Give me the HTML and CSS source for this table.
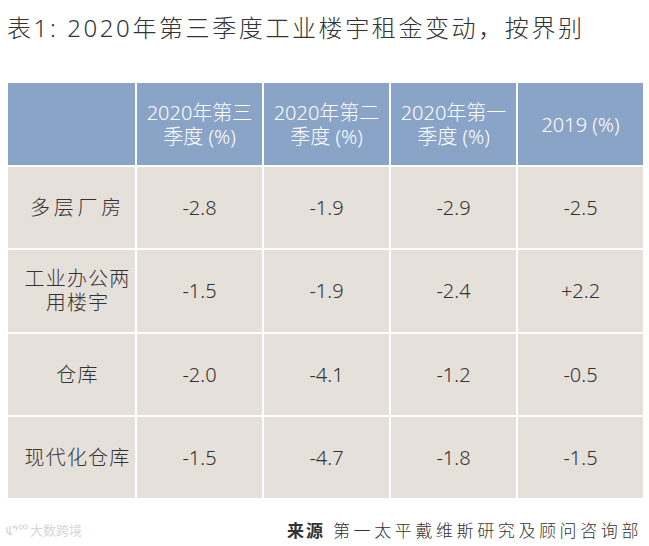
FILE: index.html
```html
<!DOCTYPE html>
<html lang="zh-CN">
<head>
<meta charset="utf-8">
<title>表1</title>
<link rel="stylesheet" href="styles.css">
</head>
<body>
<h1 class="title">表1: 2020年第三季度工业楼宇租金变动，按界别</h1>
<div class="table">
  <div class="cell head"></div>
  <div class="cell head">2020年第三<br>季度 (%)</div>
  <div class="cell head">2020年第二<br>季度 (%)</div>
  <div class="cell head">2020年第一<br>季度 (%)</div>
  <div class="cell head">2019 (%)</div>

  <div class="cell label wide">多层厂房</div>
  <div class="cell">-2.8</div>
  <div class="cell">-1.9</div>
  <div class="cell">-2.9</div>
  <div class="cell">-2.5</div>

  <div class="cell label">工业办公两<br>用楼宇</div>
  <div class="cell">-1.5</div>
  <div class="cell">-1.9</div>
  <div class="cell">-2.4</div>
  <div class="cell">+2.2</div>

  <div class="cell label">仓库</div>
  <div class="cell">-2.0</div>
  <div class="cell">-4.1</div>
  <div class="cell">-1.2</div>
  <div class="cell">-0.5</div>

  <div class="cell label">现代化仓库</div>
  <div class="cell">-1.5</div>
  <div class="cell">-4.7</div>
  <div class="cell">-1.8</div>
  <div class="cell">-1.5</div>
</div>
<div class="footer">
  <div class="watermark">
    <svg class="wm-logo" width="24" height="12" viewBox="0 0 24 12"><path d="M2 3 C1 7 3 11 7 10 M5 2 L5 9 M8 4 C10 1 13 3 11 6" fill="none" stroke="#d4d4d4" stroke-width="1.4"/><circle cx="16" cy="3" r="2" fill="none" stroke="#d4d4d4" stroke-width="1"/><circle cx="20.5" cy="3" r="2" fill="none" stroke="#d4d4d4" stroke-width="1"/></svg>
    <span>大数跨境</span>
  </div>
  <div class="source"><b>来源</b> 第一太平戴维斯研究及顾问咨询部</div>
</div>
</body>
</html>
```
FILE: styles.css
```css
html, body {
  margin: 0;
  padding: 0;
  background: #ffffff;
}
body {
  width: 649px;
  height: 546px;
  font-family: "Noto Sans", "Noto Sans CJK SC", sans-serif;
  color: #333333;
  overflow: hidden;
}
.title {
  margin: 0;
  padding: 13px 0 0 7px;
  font-size: 24px;
  line-height: 30px;
  font-weight: 300;
  letter-spacing: 2.6px;
  color: #333333;
  white-space: nowrap;
}
.table {
  margin: 40px 0 0 8px;
  width: 635px;
  display: grid;
  grid-template-columns: 127px 125px 125px 125px 125px;
  grid-template-rows: 82px 81px 82px 81px 81px;
  gap: 2px;
  background: #ffffff;
}
.cell {
  background: #e6e0db;
  display: flex;
  align-items: center;
  justify-content: center;
  text-align: center;
  font-size: 20px;
  line-height: 24px;
  font-weight: 300;
  color: #333333;
}
.cell.head {
  background: #8aa4c8;
  color: #ffffff;
  font-size: 20px;
  line-height: 24px;
  padding-top: 1px;
}
.cell.label {
  font-size: 20px;
  letter-spacing: 1.2px;
  padding-left: 12px;
}
.cell.label.wide {
  letter-spacing: 3.7px;
}
.footer {
  margin-top: 19px;
  display: flex;
  justify-content: space-between;
  align-items: center;
  padding: 0 7px 0 5px;
}
.watermark {
  display: flex;
  align-items: center;
  gap: 1px;
  color: #d6d6d6;
  font-size: 13px;
  letter-spacing: 0;
}
.source {
  font-size: 17px;
  letter-spacing: 3.6px;
  font-weight: 300;
  color: #333333;
  white-space: nowrap;
}
.source b {
  font-weight: 700;
  letter-spacing: 2px;
}
```
